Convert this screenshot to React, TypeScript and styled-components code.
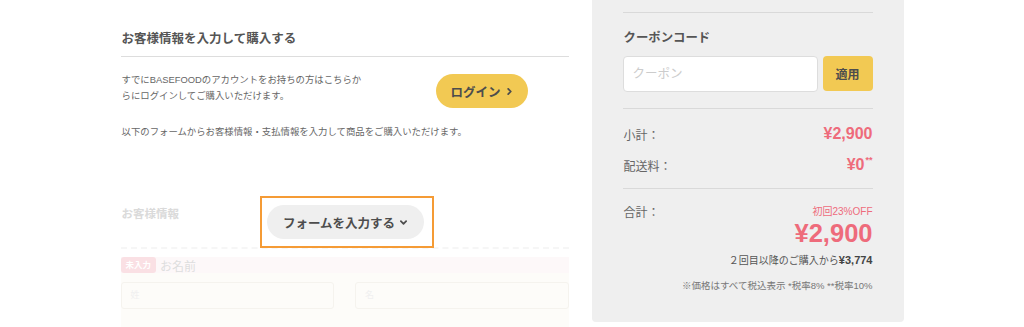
import React from 'react';
import styled, { createGlobalStyle } from 'styled-components';

const GlobalStyle = createGlobalStyle`
    body {
        margin: 0;
        background: #ffffff;
        font-family: "Liberation Sans", "Noto Sans CJK JP", sans-serif;
        color: #666666;
    }
`;

const Page = styled.div`
    width: 783px;
    height: 327px;
    margin: 0 auto;
    display: flex;
    gap: 23px;
    align-items: flex-start;
    overflow: hidden;
`;

const LeftColumn = styled.div`
    width: 448px;
    display: flex;
    flex-direction: column;
`;

const SectionTitle = styled.h2`
    margin: 0;
    padding: 30px 0 8px 1px;
    font-size: 12.5px;
    line-height: 18px;
    font-weight: bold;
    color: #555555;
    border-bottom: 1px solid #dddddd;
`;

const LoginRow = styled.div`
    display: flex;
    justify-content: space-between;
    align-items: flex-start;
    margin-top: 15px;
    padding-right: 41px;
`;

const Lead = styled.p<{ $top?: number }>`
    margin: ${(p) => p.$top || 0}px 0 0 1px;
    font-size: 9.4px;
    line-height: 16px;
    color: #666666;
`;

const PillButton = styled.button<{ $tone: 'yellow' | 'grey' }>`
    height: 34px;
    border: none;
    border-radius: 17px;
    background: ${(p) => (p.$tone === 'yellow' ? '#f2c953' : '#efefef')};
    color: #4d4d4d;
    font-family: inherit;
    font-size: 12.5px;
    font-weight: bold;
    display: flex;
    align-items: center;
    justify-content: center;
    gap: 5px;
    padding: 0;
    cursor: pointer;
`;

const LoginButton = styled(PillButton)`
    width: 92px;
    margin-top: 2px;
`;

const OpenFormButton = styled(PillButton)`
    width: 157px;
`;

const FormSection = styled.div`
    position: relative;
    margin-top: 65px;
`;

const FadedHeading = styled.h3`
    margin: 0;
    padding: 0 0 24px 1px;
    font-size: 11.5px;
    line-height: 18px;
    font-weight: bold;
    color: #dadada;
    border-bottom: 2px dashed #f6f6f6;
`;

const Highlight = styled.div`
    position: absolute;
    top: -9px;
    left: 139px;
    border: 2px solid #f59b35;
    padding: 7px 8px 7px 5px;
    background: transparent;
`;

const FieldLabelRow = styled.div`
    margin-top: 8px;
    height: 16px;
    display: flex;
    align-items: center;
    gap: 4px;
    background: #fdf8f9;
`;

const Badge = styled.span`
    height: 16px;
    padding: 0 5px;
    border-radius: 3px;
    background: #fae0e4;
    color: #ffffff;
    font-size: 8.5px;
    font-weight: bold;
    line-height: 16px;
`;

const FieldLabel = styled.span`
    font-size: 12px;
    color: #dedede;
`;

const FieldArea = styled.div`
    background: #fdfcf9;
    padding: 9px 0 20px;
    display: grid;
    grid-template-columns: 1fr 1fr;
    gap: 21px;
`;

const FadedInput = styled.div`
    height: 27px;
    border: 1px solid #f5f3ee;
    border-radius: 3px;
    box-sizing: border-box;
    padding-left: 9px;
    font-size: 9px;
    line-height: 25px;
    color: #f0f0f0;
`;

const Summary = styled.aside`
    width: 312px;
    height: 322px;
    box-sizing: border-box;
    padding: 12px 31px 0;
    background: #efefef;
    border-radius: 0 0 4px 4px;
`;

const Divider = styled.div<{ $top?: number }>`
    height: 1px;
    background: #d9d9d9;
    margin-top: ${(p) => p.$top || 0}px;
`;

const PanelHeading = styled.h3`
    margin: 16px 0 0 1px;
    font-size: 12.4px;
    line-height: 18px;
    font-weight: bold;
    color: #555555;
`;

const CouponRow = styled.div`
    display: flex;
    gap: 5px;
    margin-top: 9px;
    height: 36px;
`;

const CouponInput = styled.input`
    flex: 1;
    min-width: 0;
    height: 36px;
    box-sizing: border-box;
    border: 1px solid #dddddd;
    border-radius: 4px;
    background: #ffffff;
    padding: 0 9px;
    font-family: inherit;
    font-size: 12.5px;
    color: #555555;
    &::placeholder {
        color: #cccccc;
    }
`;

const ApplyButton = styled.button`
    width: 50px;
    height: 35px;
    border: none;
    border-radius: 4px;
    background: #f2c953;
    color: #4d4d4d;
    font-family: inherit;
    font-size: 12px;
    font-weight: bold;
    padding: 0;
`;

const PriceRow = styled.div<{ $top: number }>`
    display: flex;
    justify-content: space-between;
    align-items: center;
    margin-top: ${(p) => p.$top}px;
    height: 18px;
`;

const RowLabel = styled.span`
    font-size: 12px;
    color: #666666;
    padding-left: 1px;
`;

const Price = styled.span`
    font-size: 16px;
    font-weight: bold;
    color: #ee6b7b;
    display: flex;
    align-items: flex-start;
`;

const Stars = styled.sup`
    font-size: 9px;
    line-height: 9px;
    margin-left: 1px;
    vertical-align: top;
`;

const TotalRow = styled.div`
    display: flex;
    justify-content: space-between;
    align-items: flex-start;
    margin-top: 15px;
`;

const TotalLabel = styled(RowLabel)`
    line-height: 18px;
`;

const TotalDetail = styled.div`
    display: flex;
    flex-direction: column;
    align-items: flex-end;
    padding-top: 1px;
`;

const Discount = styled.span`
    font-size: 10px;
    line-height: 14px;
    color: #ee6b7b;
`;

const BigPrice = styled.span`
    font-size: 25.5px;
    line-height: 28px;
    font-weight: bold;
    color: #ee6b7b;
`;

const RepeatNote = styled.span`
    margin-top: 6px;
    font-size: 10px;
    line-height: 14px;
    color: #555555;
    b {
        font-size: 11px;
        color: #444444;
    }
`;

const TaxNote = styled.span`
    margin-top: 11px;
    font-size: 9.5px;
    line-height: 14px;
    color: #777777;
`;

const Chevron = ({ dir }: { dir: 'right' | 'down' }) => (
    <svg width="7" height="7" viewBox="0 0 8 8" fill="none">
        <path
            d={dir === 'right' ? 'M2.5 1 L5.5 4 L2.5 7' : 'M1 2.5 L4 5.5 L7 2.5'}
            stroke="#4d4d4d"
            strokeWidth="2"
            strokeLinecap="round"
            strokeLinejoin="round"
        />
    </svg>
);

const App = (): JSX.Element => {
    return (
        <>
            <GlobalStyle />
            <Page>
                <LeftColumn>
                    <SectionTitle>お客様情報を入力して購入する</SectionTitle>
                    <LoginRow>
                        <Lead>
                            すでにBASEFOODのアカウントをお持ちの方はこちらか
                            <br />
                            らにログインしてご購入いただけます。
                        </Lead>
                        <LoginButton $tone="yellow">
                            ログイン <Chevron dir="right" />
                        </LoginButton>
                    </LoginRow>
                    <Lead $top={16}>以下のフォームからお客様情報・支払情報を入力して商品をご購入いただけます。</Lead>

                    <FormSection>
                        <FadedHeading>お客様情報</FadedHeading>
                        <FieldLabelRow>
                            <Badge>未入力</Badge>
                            <FieldLabel>お名前</FieldLabel>
                        </FieldLabelRow>
                        <FieldArea>
                            <FadedInput>姓</FadedInput>
                            <FadedInput>名</FadedInput>
                        </FieldArea>
                        <Highlight>
                            <OpenFormButton $tone="grey">
                                フォームを入力する <Chevron dir="down" />
                            </OpenFormButton>
                        </Highlight>
                    </FormSection>
                </LeftColumn>

                <Summary>
                    <Divider />
                    <PanelHeading>クーポンコード</PanelHeading>
                    <CouponRow>
                        <CouponInput placeholder="クーポン" />
                        <ApplyButton>適用</ApplyButton>
                    </CouponRow>
                    <Divider $top={16} />
                    <PriceRow $top={16}>
                        <RowLabel>小計：</RowLabel>
                        <Price>¥2,900</Price>
                    </PriceRow>
                    <PriceRow $top={13}>
                        <RowLabel>配送料：</RowLabel>
                        <Price>
                            ¥0<Stars>**</Stars>
                        </Price>
                    </PriceRow>
                    <Divider $top={14} />
                    <TotalRow>
                        <TotalLabel>合計：</TotalLabel>
                        <TotalDetail>
                            <Discount>初回23%OFF</Discount>
                            <BigPrice>¥2,900</BigPrice>
                            <RepeatNote>
                                ２回目以降のご購入から<b>¥3,774</b>
                            </RepeatNote>
                            <TaxNote>※価格はすべて税込表示 *税率8% **税率10%</TaxNote>
                        </TotalDetail>
                    </TotalRow>
                </Summary>
            </Page>
        </>
    );
};

export default App;
